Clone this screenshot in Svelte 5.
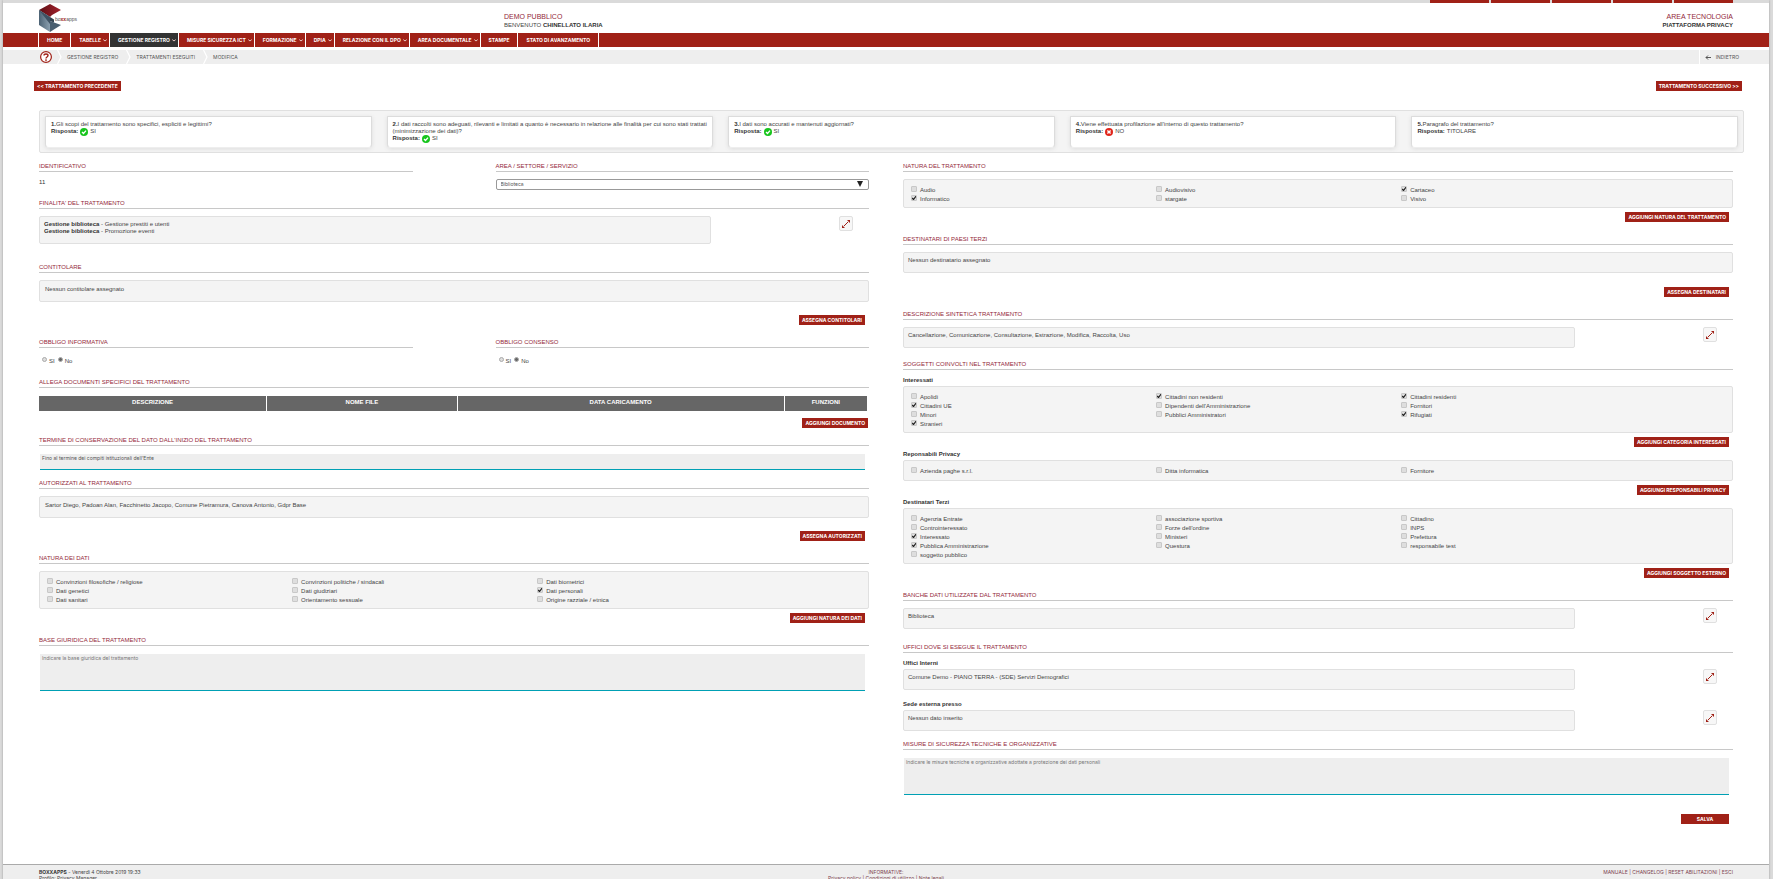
<script lang="ts">
  interface Option {
    label: string
    checked?: boolean
  }

  const menu = [
    { label: "HOME" },
    { label: "TABELLE", sub: true },
    { label: "GESTIONE REGISTRO", sub: true, active: true },
    { label: "MISURE SICUREZZA ICT", sub: true },
    { label: "FORMAZIONE", sub: true },
    { label: "DPIA", sub: true },
    { label: "RELAZIONE CON IL DPO", sub: true },
    { label: "AREA DOCUMENTALE", sub: true },
    { label: "STAMPE" },
    { label: "STATO DI AVANZAMENTO" },
  ]

  const crumbs = ["GESTIONE REGISTRO", "TRATTAMENTI ESEGUITI", "MODIFICA"]

  const questions = [
    { text: "Gli scopi del trattamento sono specifici, espliciti e legittimi?", ok: true, answer: "SI" },
    {
      text: "I dati raccolti sono adeguati, rilevanti e limitati a quanto è necessario in relazione alle finalità per cui sono stati trattati (minimizzazione dei dati)?",
      ok: true,
      answer: "SI",
    },
    { text: "I dati sono accurati e mantenuti aggiornati?", ok: true, answer: "SI" },
    { text: "Viene effettuata profilazione all'interno di questo trattamento?", ok: false, answer: "NO" },
    { text: "Paragrafo del trattamento?", answer: "TITOLARE" },
  ]

  // options are listed row by row, three per row
  const naturaDati: Option[] = $state([
    { label: "Convinzioni filosofiche / religiose" },
    { label: "Convinzioni politiche / sindacali" },
    { label: "Dati biometrici" },
    { label: "Dati genetici" },
    { label: "Dati giudiziari" },
    { label: "Dati personali", checked: true },
    { label: "Dati sanitari" },
    { label: "Orientamento sessuale" },
    { label: "Origine razziale / etnica" },
  ])

  const naturaTrattamento: Option[] = $state([
    { label: "Audio" },
    { label: "Audiovisivo" },
    { label: "Cartaceo", checked: true },
    { label: "Informatico", checked: true },
    { label: "stargate" },
    { label: "Visivo" },
  ])

  const interessati: Option[] = $state([
    { label: "Apolidi" },
    { label: "Cittadini non residenti", checked: true },
    { label: "Cittadini residenti", checked: true },
    { label: "Cittadini UE", checked: true },
    { label: "Dipendenti dell'Amministrazione" },
    { label: "Fornitori" },
    { label: "Minori" },
    { label: "Pubblici Amministratori" },
    { label: "Rifugiati", checked: true },
    { label: "Stranieri", checked: true },
  ])

  const responsabili: Option[] = $state([
    { label: "Azienda paghe s.r.l." },
    { label: "Ditta informatica" },
    { label: "Fornitore" },
  ])

  const destinatari: Option[] = $state([
    { label: "Agenzia Entrate" },
    { label: "associazione sportiva" },
    { label: "Cittadino" },
    { label: "Controinteressato" },
    { label: "Forze dell'ordine" },
    { label: "INPS" },
    { label: "Interessato", checked: true },
    { label: "Ministeri" },
    { label: "Prefettura" },
    { label: "Pubblica Amministrazione", checked: true },
    { label: "Questura" },
    { label: "responsabile test" },
    { label: "soggetto pubblico" },
  ])

  let informativa = $state("No")
  let consenso = $state("No")
  let termine = $state("Fino al termine dei compiti istituzionali dell'Ente")
</script>

{#snippet checks(options: Option[])}
  <div class="panel checks">
    {#each options as option}
      <label class="check">
        <input type="checkbox" bind:checked={option.checked} />
        {option.label}
      </label>
    {/each}
  </div>
{/snippet}

{#snippet expandButton()}
  <button type="button" class="expand" aria-label="Espandi">
    <svg viewBox="0 0 8 8" aria-hidden="true">
      <path d="M2 6 6 2" stroke="#a02117" stroke-width="1" />
      <path d="M5 0H8V3ZM0 5V8H3Z" fill="#a02117" />
    </svg>
  </button>
{/snippet}

{#snippet expandable(text: string)}
  <div class="expandable">
    <div class="panel">{text}</div>
    {@render expandButton()}
  </div>
{/snippet}

{#snippet action(label: string)}
  <div class="actions">
    <button type="button" class="btn">{label}</button>
  </div>
{/snippet}

<div class="page">
  <div class="tabs">
    {#each Array(5) as _}
      <span></span>
    {/each}
  </div>

  <header class="header">
    <a class="logo" href="#home" aria-label="boxxapps">
      <svg viewBox="0 0 41 28" aria-hidden="true">
        <defs>
          <linearGradient id="top" x1="0" x2="1">
            <stop offset="0" stop-color="#5e0f16" />
            <stop offset="1" stop-color="#a3222c" />
          </linearGradient>
          <linearGradient id="side" x1="0" x2="1">
            <stop offset="0" stop-color="#4c6274" />
            <stop offset="1" stop-color="#8ba0b0" />
          </linearGradient>
        </defs>
        <path d="M0 6 11 0 22 6 13 11 11 13Z" fill="url(#top)" />
        <path d="M0 6 11 13V28L0 21Z" fill="url(#side)" />
        <path d="M0 6 11 13V20Z" fill="#3f5263" />
        <path d="M11 17 22 21 11 28Z" fill="#4a5f70" />
        <path d="M11 13 15 15.5V18.5L11 17Z" fill="#334452" />
        <text x="16" y="17" font-size="5" fill="#555">bo<tspan fill="#a02117" font-weight="bold">xx</tspan>apps</text>
      </svg>
    </a>
    <div class="user">
      <div class="title">DEMO PUBBLICO</div>
      <div>BENVENUTO <b>CHINELLATO ILARIA</b></div>
    </div>
    <div class="area">
      <div class="title">AREA TECNOLOGIA</div>
      <b>PIATTAFORMA PRIVACY</b>
    </div>
  </header>

  <nav class="nav">
    {#each menu as item}
      <a href="#menu" class:active={item.active} class:sub={item.sub}>
        {item.label}
        {#if item.sub}
          <svg viewBox="0 0 4 3" aria-hidden="true"><path d="M.3 .6 2 2 3.7 .6" fill="none" stroke="#e8c9c6" /></svg>
        {/if}
      </a>
    {/each}
  </nav>

  <div class="crumbs">
    <a class="help" href="#help" aria-label="Aiuto">
      <svg viewBox="0 0 12 12" aria-hidden="true">
        <circle cx="6" cy="6" r="5.4" fill="#fff" stroke="#a02117" stroke-width="1.2" />
        <path d="M4 4.6C4 2.4 8 2.4 8 4.6 8 6 6 6 6 7.4" fill="none" stroke="#a02117" stroke-width="1.4" />
        <circle cx="6" cy="9.1" r=".9" fill="#a02117" />
      </svg>
    </a>
    {#each crumbs as crumb}
      <svg class="sep" viewBox="0 0 5 14" aria-hidden="true"><path d="M.5 0 4 7 .5 14" fill="none" stroke="#fff" stroke-width="1.2" /></svg>
      <a class="crumb" href="#crumb">{crumb}</a>
    {/each}
    <a class="back" href="#back">
      <svg viewBox="0 0 6 5" aria-hidden="true"><path d="M6 2.5H1M3 .5 1 2.5 3 4.5" fill="none" stroke="#555" /></svg>
      INDIETRO
    </a>
  </div>

  <div class="pager">
    <button type="button" class="btn">&lt;&lt; TRATTAMENTO PRECEDENTE</button>
    <button type="button" class="btn">TRATTAMENTO SUCCESSIVO &gt;&gt;</button>
  </div>

  <div class="questions">
    {#each questions as question, i}
      <div class="card">
        <div><b>{i + 1}.</b>{question.text}</div>
        <div class="answer">
          <b>Risposta:</b>
          {#if question.ok === true}
            <svg viewBox="0 0 8 8" aria-hidden="true">
              <circle cx="4" cy="4" r="4" fill="#17c51d" />
              <path d="M2 4 3.5 5.5 6 2.6" fill="none" stroke="#fff" stroke-width="1.3" />
            </svg>
          {:else if question.ok === false}
            <svg viewBox="0 0 8 8" aria-hidden="true">
              <circle cx="4" cy="4" r="4" fill="#e0261b" />
              <path d="M2.4 2.4 5.6 5.6M5.6 2.4 2.4 5.6" stroke="#fff" stroke-width="1.4" />
            </svg>
          {/if}
          {question.answer}
        </div>
      </div>
    {/each}
  </div>

  <main class="columns">
    <div>
      <div class="halves">
        <section>
          <h2>IDENTIFICATIVO</h2>
          <div class="value">11</div>
        </section>
        <section>
          <h2><label for="area">AREA / SETTORE / SERVIZIO</label></h2>
          <div class="select">
            <select id="area">
              <option>Biblioteca</option>
            </select>
            <svg viewBox="0 0 6 6" aria-hidden="true"><path d="M0 0H6L3 6Z" fill="#222" /></svg>
          </div>
        </section>
      </div>

      <section class="wide-gap">
        <h2>FINALITA' DEL TRATTAMENTO</h2>
        <div class="expandable">
          <div class="panel purposes">
            <div><b>Gestione biblioteca</b> - Gestione prestiti e utenti</div>
            <div><b>Gestione biblioteca</b> - Promozione eventi</div>
          </div>
          {@render expandButton()}
        </div>
      </section>

      <section class="assign">
        <h2>CONTITOLARE</h2>
        <div class="panel roomy">Nessun contitolare assegnato</div>
        {@render action("ASSEGNA CONTITOLARI")}
      </section>

      <div class="halves">
        <section>
          <h2 id="informativa">OBBLIGO INFORMATIVA</h2>
          <div class="radios" role="radiogroup" aria-labelledby="informativa">
            <label><input type="radio" name="informativa" value="SI" bind:group={informativa} />SI</label>
            <label><input type="radio" name="informativa" value="No" bind:group={informativa} />No</label>
          </div>
        </section>
        <section>
          <h2 id="consenso">OBBLIGO CONSENSO</h2>
          <div class="radios" role="radiogroup" aria-labelledby="consenso">
            <label><input type="radio" name="consenso" value="SI" bind:group={consenso} />SI</label>
            <label><input type="radio" name="consenso" value="No" bind:group={consenso} />No</label>
          </div>
        </section>
      </div>

      <section class="documents">
        <h2>ALLEGA DOCUMENTI SPECIFICI DEL TRATTAMENTO</h2>
        <table>
          <thead>
            <tr>
              <th class="description">DESCRIZIONE</th>
              <th class="file">NOME FILE</th>
              <th>DATA CARICAMENTO</th>
              <th class="functions">FUNZIONI</th>
            </tr>
          </thead>
        </table>
        {@render action("AGGIUNGI DOCUMENTO")}
      </section>

      <section>
        <h2><label for="termine">TERMINE DI CONSERVAZIONE DEL DATO DALL'INIZIO DEL TRATTAMENTO</label></h2>
        <textarea id="termine" class="short" bind:value={termine}></textarea>
      </section>

      <section class="assign">
        <h2>AUTORIZZATI AL TRATTAMENTO</h2>
        <div class="panel roomy">
          Sartor Diego, Padoan Alan, Facchinetto Jacopo, Comune Pietramura, Canova Antonio, Gdpr Base
        </div>
        {@render action("ASSEGNA AUTORIZZATI")}
      </section>

      <section class="add">
        <h2>NATURA DEI DATI</h2>
        {@render checks(naturaDati)}
        {@render action("AGGIUNGI NATURA DEI DATI")}
      </section>

      <section>
        <h2><label for="base">BASE GIURIDICA DEL TRATTAMENTO</label></h2>
        <textarea id="base" placeholder="Indicare la base giuridica del trattamento"></textarea>
      </section>
    </div>

    <div>
      <section class="add">
        <h2>NATURA DEL TRATTAMENTO</h2>
        {@render checks(naturaTrattamento)}
        {@render action("AGGIUNGI NATURA DEL TRATTAMENTO")}
      </section>

      <section class="assign">
        <h2>DESTINATARI DI PAESI TERZI</h2>
        <div class="panel">Nessun destinatario assegnato</div>
        {@render action("ASSEGNA DESTINATARI")}
      </section>

      <section class="summary">
        <h2>DESCRIZIONE SINTETICA TRATTAMENTO</h2>
        {@render expandable("Cancellazione, Comunicazione, Consultazione, Estrazione, Modifica, Raccolta, Uso")}
      </section>

      <section class="add">
        <h2>SOGGETTI COINVOLTI NEL TRATTAMENTO</h2>
        <h3>Interessati</h3>
        {@render checks(interessati)}
        {@render action("AGGIUNGI CATEGORIA INTERESSATI")}
        <h3>Reponsabili Privacy</h3>
        {@render checks(responsabili)}
        {@render action("AGGIUNGI RESPONSABILI PRIVACY")}
        <h3>Destinatari Terzi</h3>
        {@render checks(destinatari)}
        {@render action("AGGIUNGI SOGGETTO ESTERNO")}
      </section>

      <section class="databases">
        <h2>BANCHE DATI UTILIZZATE DAL TRATTAMENTO</h2>
        {@render expandable("Biblioteca")}
      </section>

      <section class="offices">
        <h2>UFFICI DOVE SI ESEGUE IL TRATTAMENTO</h2>
        <h3>Uffici Interni</h3>
        {@render expandable("Comune Demo - PIANO TERRA - (SDE) Servizi Demografici")}
        <h3>Sede esterna presso</h3>
        {@render expandable("Nessun dato inserito")}
      </section>

      <section class="save">
        <h2><label for="misure">MISURE DI SICUREZZA TECNICHE E ORGANIZZATIVE</label></h2>
        <textarea id="misure" placeholder="Indicare le misure tecniche e organizzative adottate a protezione dei dati personali"></textarea>
        {@render action("SALVA")}
      </section>
    </div>
  </main>

  <footer class="footer">
    <div>
      <div><b>BOXXAPPS</b> - Venerdì 4 Ottobre 2019 19:33</div>
      <div>Profilo: Privacy Manager</div>
    </div>
    <div class="legal">
      <div>INFORMATIVE:</div>
      <div><a href="#privacy">Privacy policy</a> | <a href="#terms">Condizioni di utilizzo</a> | <a href="#legal">Note legali</a></div>
    </div>
    <div class="links">
      <a href="#manual">MANUALE</a> | <a href="#changelog">CHANGELOG</a> | <a href="#reset">RESET ABILITAZIONI</a> | <a href="#exit">ESCI</a>
    </div>
  </footer>
</div>

<style>
  :global(body) {
    background: #dadada;
    overflow: hidden;
  }

  .page {
    --red: #a02117;
    --line: #c8c8c8;
    --panel: #f4f4f4;
    --panel-border: #e0e0e0;
    --small: Inter, "Liberation Sans", sans-serif;
    display: flex;
    flex-direction: column;
    min-height: 100vh;
    margin: 0 4px 0 3px;
    background: #fff;
    box-shadow: 0 0 2px #999;
    color: #444;
    font-family: "Liberation Sans", Arial, sans-serif;
    font-size: 6px;
    line-height: 7px;
  }

  a {
    color: inherit;
    text-decoration: none;
  }

  b {
    color: #333;
  }

  .tabs {
    display: flex;
    justify-content: flex-end;
    gap: 2px;
    height: 3px;
    padding-right: 36px;
    background: #dadada;
  }

  .tabs span {
    width: 59px;
    background: var(--red);
  }

  .header {
    display: grid;
    grid-template-columns: 465px 1fr auto;
    height: 30px;
    padding: 0 36px;
    box-sizing: border-box;
  }

  .logo svg {
    display: block;
    width: 41px;
    height: 28px;
    margin-top: 1px;
  }

  .user,
  .area {
    padding-top: 9px;
    line-height: 8px;
  }

  .area {
    text-align: right;
  }

  .title {
    color: #93293a;
    font-size: 7px;
    line-height: 9px;
  }

  .nav {
    display: flex;
    height: 14px;
    padding-left: 35px;
    background: var(--red);
    color: #fff;
    font-family: var(--small);
    font-size: 5px;
    font-weight: bold;
    line-height: 14px;
  }

  .nav a {
    display: flex;
    align-items: center;
    gap: 2px;
    padding: 0 8px;
    border-right: 1px solid #fff;
  }

  .nav a:first-child {
    border-left: 1px solid #fff;
  }

  .nav a.sub {
    padding-right: 2px;
  }

  .nav a.active {
    background: #333;
  }

  .nav svg {
    width: 4px;
    height: 3px;
  }

  .crumbs {
    display: flex;
    align-items: center;
    gap: 5px;
    height: 14px;
    margin-top: 3px;
    padding-left: 37px;
    background: #eee;
    color: #555;
    font-family: var(--small);
    font-size: 5px;
  }

  .crumb {
    padding-right: 3px;
  }

  .help,
  .help svg {
    display: block;
    width: 12px;
    height: 12px;
  }

  .sep {
    width: 5px;
    height: 14px;
  }

  .back {
    display: flex;
    align-items: center;
    gap: 5px;
    height: 14px;
    margin-left: auto;
    padding: 0 30px 0 5px;
    border-left: 1px solid #fff;
  }

  .back svg {
    width: 6px;
    height: 5px;
  }

  .btn {
    height: 10px;
    padding: 0 3px;
    border: 0;
    background: var(--red);
    color: #fff;
    font: bold 5px/10px var(--small);
    text-align: center;
    white-space: nowrap;
    cursor: pointer;
  }

  .pager {
    display: flex;
    justify-content: space-between;
    padding: 17px 27px 0 31px;
  }

  .questions {
    display: grid;
    grid-template-columns: repeat(5, 1fr);
    gap: 15px;
    margin: 19px 25px 0 36px;
    padding: 5px 5px 4px;
    background: var(--panel);
    border: 1px solid var(--panel-border);
    border-radius: 2px;
  }

  .card {
    min-height: 32px;
    padding: 4px 5px;
    box-sizing: border-box;
    background: #fff;
    border: 1px solid #dcdcdc;
    border-bottom-color: #eee;
    border-radius: 1px 1px 4px 4px;
    box-shadow: 0 1px 4px #ddd;
  }

  .answer {
    display: flex;
    gap: 2px;
  }

  .answer svg {
    width: 8px;
    height: 8px;
  }

  .columns {
    display: grid;
    grid-template-columns: 1fr 1fr;
    gap: 34px;
    padding: 9px 36px 0;
  }

  section {
    margin-bottom: 9px;
  }

  section.wide-gap {
    margin-bottom: 19px;
  }

  section.summary {
    margin-bottom: 12px;
  }

  section.databases {
    margin-bottom: 14px;
  }

  section.assign,
  section.add {
    margin-bottom: 13px;
  }

  section.documents {
    margin-bottom: 8px;
  }

  .halves {
    display: grid;
    grid-template-columns: 45% 45%;
    justify-content: start;
    gap: 10%;
  }

  h2 {
    margin: 0 0 7px;
    border-bottom: 1px solid var(--line);
    color: #93293a;
    font-size: 6px;
    font-weight: normal;
    line-height: 9px;
  }

  h3 {
    margin: 0 0 2px;
    color: #333;
    font-size: 6px;
    line-height: 7px;
  }

  .actions + h3 {
    margin-top: 4px;
  }

  .offices .expandable + h3 {
    margin-top: 11px;
  }

  .value {
    color: #333;
  }

  .panel {
    min-height: 21px;
    padding: 4px;
    box-sizing: border-box;
    background: var(--panel);
    border: 1px solid var(--panel-border);
    border-radius: 2px;
  }

  .panel.roomy {
    min-height: 22px;
    padding: 5px;
  }

  .panel.purposes {
    min-height: 28px;
  }

  .expandable {
    display: grid;
    grid-template-columns: 81% 1fr;
  }

  .expand {
    justify-self: end;
    width: 14px;
    height: 15px;
    margin-right: 16px;
    padding: 2px;
    background: #f7f7f7;
    border: 1px solid var(--panel-border);
    border-radius: 2px;
    cursor: pointer;
  }

  .expand svg {
    display: block;
    width: 8px;
    height: 8px;
  }

  .checks {
    display: grid;
    grid-template-columns: repeat(3, 30%);
    padding: 6px 4px 3px 7px;
    align-content: start;
  }

  .check {
    display: flex;
    gap: 3px;
    line-height: 9px;
  }

  input {
    appearance: none;
    flex: none;
    width: 6px;
    height: 6px;
    margin: 0;
    background: #dedede;
    border: 1px solid #c8c8c8;
    border-radius: 1px;
  }

  input[type="checkbox"]:checked {
    background: #dedede
      url("data:image/svg+xml,%3Csvg xmlns='http://www.w3.org/2000/svg' viewBox='0 0 6 6'%3E%3Cpath d='M1.2 3 2.5 4.5 5 1.2' fill='none' stroke='%23222' stroke-width='1.2'/%3E%3C/svg%3E")
      center / 6px 6px no-repeat;
  }

  .radios {
    display: flex;
    gap: 3px;
    height: 14px;
    padding: 2px 0 0 3px;
    box-sizing: border-box;
  }

  .radios label {
    display: flex;
    gap: 2px;
    line-height: 9px;
  }

  input[type="radio"] {
    width: 5px;
    height: 5px;
    border-color: #aaa;
    border-radius: 50%;
  }

  input[type="radio"]:checked {
    background: #666;
  }

  .select {
    position: relative;
    height: 11px;
  }

  select {
    display: block;
    appearance: none;
    width: 100%;
    height: 11px;
    padding: 0 4px;
    background: #fff;
    border: 1px solid #999;
    border-radius: 2px;
    color: #555;
    font: 5px/9px var(--small);
  }

  .select svg {
    position: absolute;
    top: 2px;
    right: 6px;
    width: 6px;
    height: 6px;
    pointer-events: none;
  }

  table {
    width: calc(100% - 2px);
    margin-top: 8px;
    border-collapse: collapse;
    table-layout: fixed;
  }

  th {
    height: 15px;
    padding: 0 0 2px;
    box-sizing: border-box;
    background: #666;
    border-left: 1px solid #fff;
    color: #fff;
    line-height: 7px;
  }

  th:first-child {
    border-left: 0;
  }

  .description {
    width: 27.5%;
  }

  .file {
    width: 23%;
  }

  .functions {
    width: 10%;
  }

  textarea {
    display: block;
    width: calc(100% - 5px);
    height: 37px;
    margin: 8px 0 0 1px;
    padding: 1px 2px;
    box-sizing: border-box;
    background: #eee;
    border: 0;
    border-bottom: 1px solid #00a0b4;
    color: #555;
    font: 5px/7px var(--small);
    resize: none;
    overflow: hidden;
  }

  textarea.short {
    height: 16px;
  }

  textarea::placeholder {
    color: #777;
  }

  .actions {
    display: flex;
    justify-content: flex-end;
    padding-right: 4px;
  }

  .add .actions {
    margin-top: 4px;
  }

  .assign .actions {
    margin-top: 14px;
  }

  .assign .roomy + .actions {
    margin-top: 13px;
  }

  .documents .actions {
    margin-top: 7px;
    padding-right: 1px;
  }

  .save .actions {
    margin-top: 19px;
  }

  .save .btn {
    width: 48px;
  }

  .footer {
    display: grid;
    grid-template-columns: 1fr 1fr 1fr;
    margin-top: 31px;
    padding: 4px 36px 0;
    background: #eee;
    border-top: 1px solid #aaa;
    font-family: var(--small);
    font-size: 5px;
    line-height: 6px;
  }

  .legal {
    color: #7d4450;
    text-align: center;
  }

  .links {
    color: #7d4450;
    text-align: right;
  }
</style>
